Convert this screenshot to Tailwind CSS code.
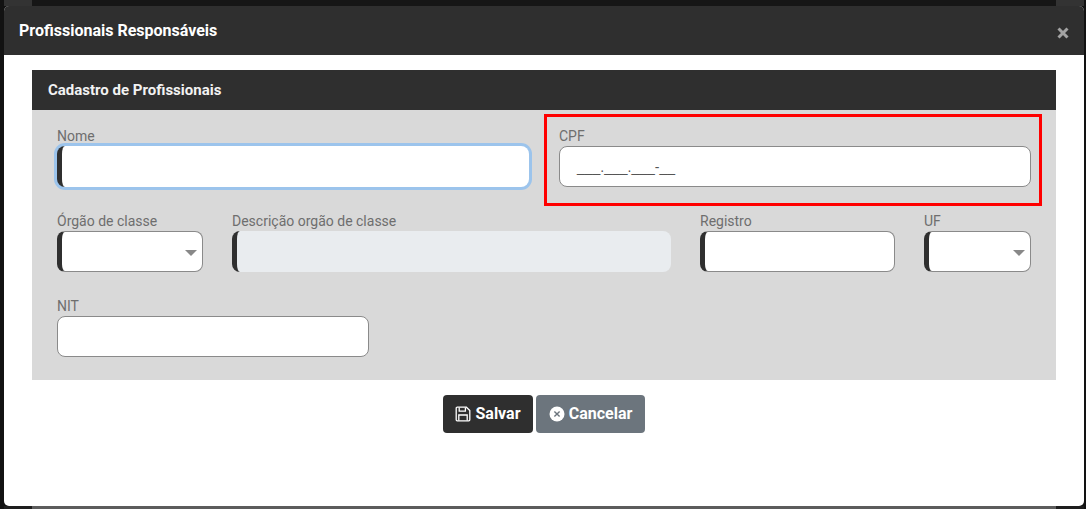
<!DOCTYPE html>
<html lang="pt">
<head>
<meta charset="utf-8">
<title>Profissionais Responsáveis</title>
<script src="https://cdn.jsdelivr.net/npm/@tailwindcss/browser@4"></script>
</head>
<body class="relative w-[1086px] h-[509px] overflow-hidden bg-[#121212] font-['Roboto',sans-serif]">
<!-- dimmed page behind the modal -->
<div class="absolute left-[4px] top-0 w-[28px] h-[6px] bg-[#333333]"></div>
<div class="absolute left-[32px] top-0 w-[1024px] h-[6px] bg-[#161616]"></div>
<div class="absolute left-[1056px] top-0 w-[28px] h-[6px] bg-[#333333]"></div>
<div class="absolute left-[4px] top-[506px] w-[28px] h-[3px] bg-[#1e1e1e]"></div>
<div class="absolute left-[32px] top-[506px] w-[1024px] h-[3px] bg-[#5c5c5c]"></div>
<div class="absolute left-[1056px] top-[506px] w-[28px] h-[3px] bg-[#1e1e1e]"></div>

<div class="absolute left-[4px] top-[6px] w-[1080px] h-[500px] bg-white rounded-[5px] overflow-hidden">
  <div class="h-[49px] bg-[#2f2f2f] flex items-center justify-between pl-[15px] pr-[15px]">
    <h1 class="text-[16px] leading-[24px] font-bold text-white">Profissionais Responsáveis</h1>
    <span class="text-[#9a9a9a]">
      <svg width="12" height="12" viewBox="0 0 12 12" class="mt-[4px]"><path d="M1.5 1.5L10.5 10.5M10.5 1.5L1.5 10.5" stroke="#a3a3a3" stroke-width="3"/></svg>
    </span>
  </div>

  <div class="px-[28px] pt-[15px]">
    <section>
      <div class="h-[40px] bg-[#2f2f2f] flex items-center pl-[16px]">
        <h2 class="text-[15px] font-bold text-[#f2f2f2]">Cadastro de Profissionais</h2>
      </div>
      <div class="h-[270px] bg-[#d9d9d9] px-[25px] pt-[17px] flex flex-col gap-[25px]">
        <div class="flex gap-[30px]">
          <div class="flex-1">
            <label class="block text-[14px] leading-[19px] text-[#6e6e6e]">Nome</label>
            <div class="h-[41px] bg-white rounded-[8px] border-l-[5px] border-l-[#2f2f2f] shadow-[0_0_0_3px_#9cc4ec]"></div>
          </div>
          <div class="flex-1">
            <label class="block text-[14px] leading-[19px] text-[#6e6e6e]">CPF</label>
            <div class="h-[41px] bg-white rounded-[8px] border border-[#8a8a8a] pl-[17px] text-[14px] leading-[41px] text-[#555555] font-['Liberation_Sans',sans-serif]">___.___.___-__</div>
          </div>
        </div>
        <div class="flex gap-[29px]">
          <div class="w-[146px]">
            <label class="block text-[14px] leading-[19px] text-[#6e6e6e]">Órgão de classe</label>
            <div class="relative h-[41px] bg-white rounded-[8px] border border-[#8a8a8a] border-l-[5px] border-l-[#2f2f2f]">
              <span class="absolute right-[5px] top-[18px] w-0 h-0 border-x-[6px] border-x-transparent border-t-[6px] border-t-[#888888]"></span>
            </div>
          </div>
          <div class="flex-1">
            <label class="block text-[14px] leading-[19px] text-[#6e6e6e]">Descrição orgão de classe</label>
            <div class="h-[41px] bg-[#e9ecef] rounded-[8px] border-l-[5px] border-l-[#2f2f2f]"></div>
          </div>
          <div class="w-[195px]">
            <label class="block text-[14px] leading-[19px] text-[#6e6e6e]">Registro</label>
            <div class="h-[41px] bg-white rounded-[8px] border border-[#8a8a8a] border-l-[5px] border-l-[#2f2f2f]"></div>
          </div>
          <div class="w-[107px]">
            <label class="block text-[14px] leading-[19px] text-[#6e6e6e]">UF</label>
            <div class="relative h-[41px] bg-white rounded-[8px] border border-[#8a8a8a] border-l-[5px] border-l-[#2f2f2f]">
              <span class="absolute right-[5px] top-[18px] w-0 h-0 border-x-[6px] border-x-transparent border-t-[6px] border-t-[#888888]"></span>
            </div>
          </div>
        </div>
        <div class="w-[312px]">
          <label class="block text-[14px] leading-[19px] text-[#6e6e6e]">NIT</label>
          <div class="h-[41px] bg-white rounded-[8px] border border-[#8a8a8a]"></div>
        </div>
      </div>
    </section>
    <div class="flex justify-center gap-[3px] mt-[15px]">
      <button class="h-[38px] w-[90px] bg-[#2f2f2f] rounded-[4px] text-white text-[16px] font-bold flex items-center justify-center gap-[4px]">
        <svg width="16" height="16" viewBox="0 0 16 16" fill="none" stroke="#ffffff" stroke-width="1.3"><path d="M1.2 2.2a1 1 0 0 1 1-1h9.2l3.4 3.4v9.2a1 1 0 0 1-1 1H2.2a1 1 0 0 1-1-1z"/><path d="M4.2 1.4v3.8h6.2V1.4M3.8 14.6V9h8.4v5.6"/></svg>
        <span>Salvar</span>
      </button>
      <button class="h-[38px] w-[109px] bg-[#6c757d] rounded-[4px] text-white text-[16px] font-bold flex items-center justify-center gap-[4px]">
        <svg width="16" height="16" viewBox="0 0 16 16"><circle cx="8" cy="8" r="7.5" fill="#ffffff"/><path d="M5.4 5.4l5.2 5.2M10.6 5.4l-5.2 5.2" stroke="#6c757d" stroke-width="1.4"/></svg>
        <span>Cancelar</span>
      </button>
    </div>
  </div>
</div>
<!-- red annotation -->
<div class="absolute left-[544px] top-[114px] w-[498px] h-[92px] border-[3px] border-[#ff0000]"></div>
</body>
</html>
